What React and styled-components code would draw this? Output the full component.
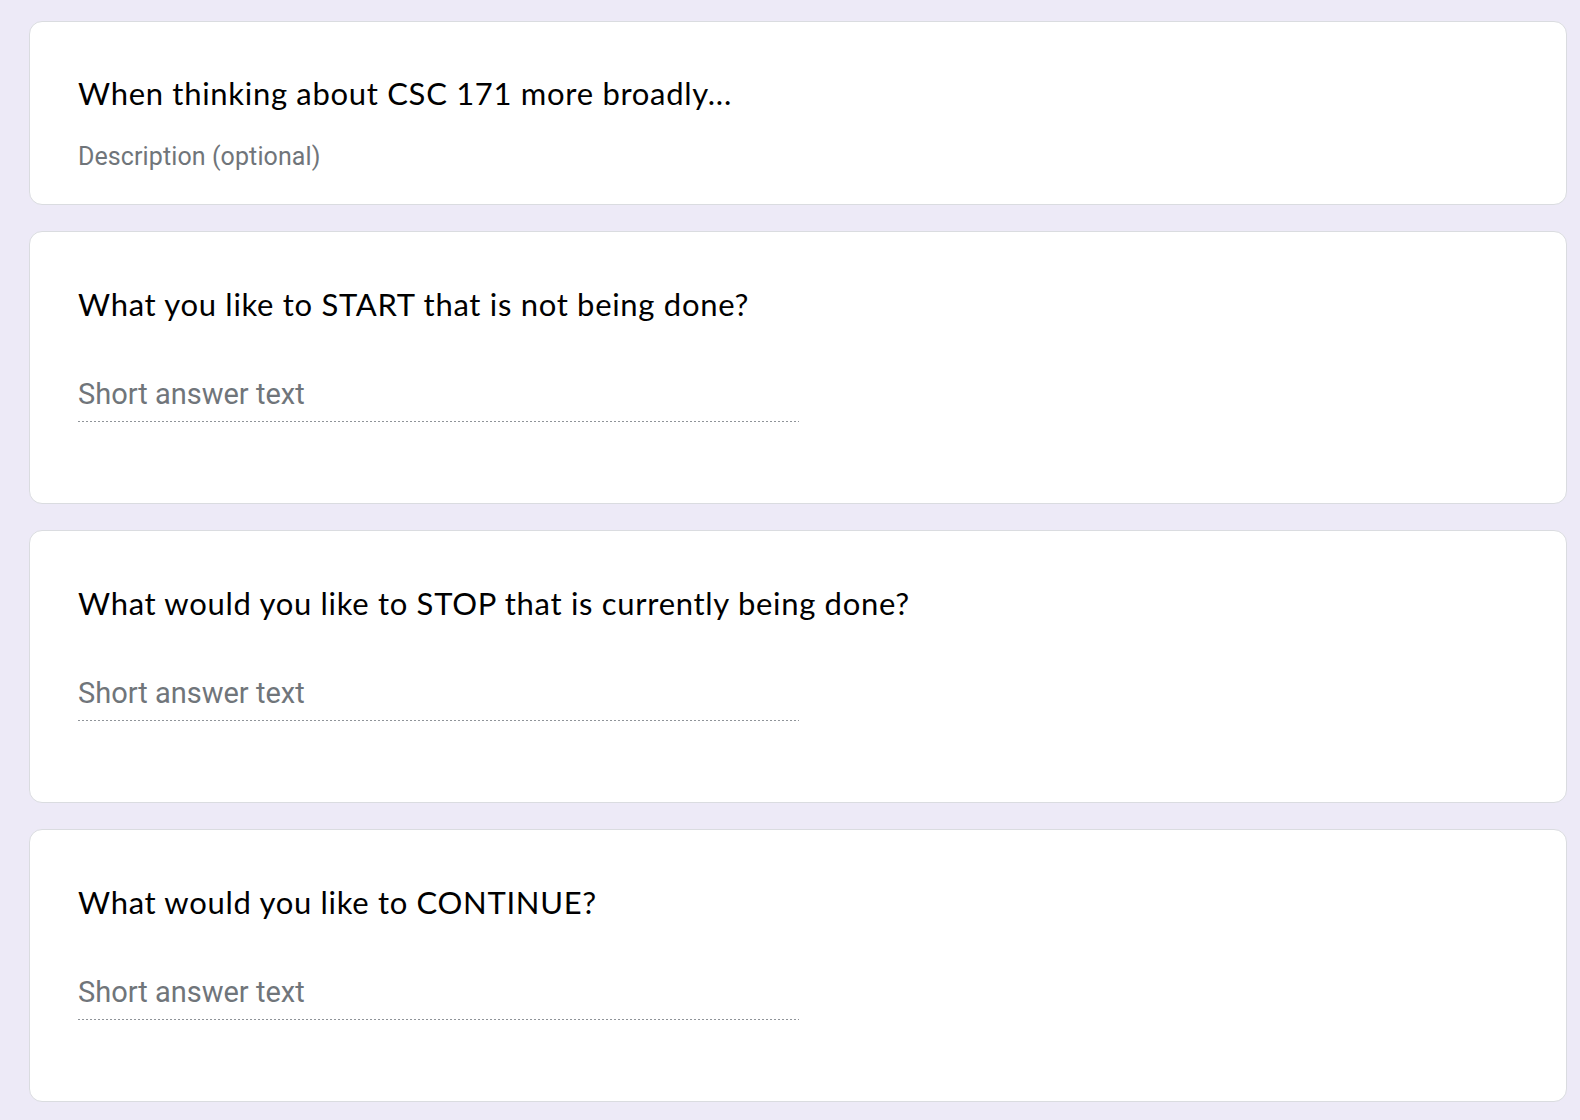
import styled, { createGlobalStyle } from "styled-components";

const GlobalStyle = createGlobalStyle`
  html, body {
    margin: 0;
    padding: 0;
    background-color: #edeaf7;
  }
`;

const questions = [
  "What you like to START that is not being done?",
  "What would you like to STOP that is currently being done?",
  "What would you like to CONTINUE?",
];

function App() {
  return (
    <>
      <GlobalStyle />
      <FormWrap>
        <SectionCard>
          <Title>When thinking about CSC 171 more broadly...</Title>
          <Description>Description (optional)</Description>
        </SectionCard>

        {questions.map((q) => (
          <QuestionCard key={q}>
            <Title>{q}</Title>
            <ShortAnswer>Short answer text</ShortAnswer>
          </QuestionCard>
        ))}
      </FormWrap>
    </>
  );
}

const FormWrap = styled.div`
  display: flex;
  flex-direction: column;
  gap: 26px;
  width: 1538px;
  padding: 21px 0 19px 29px;
  box-sizing: content-box;
`;

const Card = styled.div`
  box-sizing: border-box;
  background-color: #fff;
  border: 1px solid #dadce0;
  border-radius: 13px;
  padding: 0 48px;
`;

const SectionCard = styled(Card)`
  height: 184px;
  padding-top: 53px;
`;

const QuestionCard = styled(Card)`
  height: 273px;
  padding-top: 54px;
`;

const Title = styled.div`
  font-family: Lato, "Open Sans", sans-serif;
  font-size: 31px;
  line-height: 36px;
  letter-spacing: 0.7px;
  color: #000;
`;

const Description = styled.div`
  margin-top: 31px;
  font-family: Roboto, "Liberation Sans", sans-serif;
  font-size: 25px;
  line-height: 29px;
  letter-spacing: 0.1px;
  color: #70757a;
`;

const ShortAnswer = styled.div`
  width: 721px;
  margin-top: 55px;
  padding-bottom: 11px;
  font-family: Roboto, "Liberation Sans", sans-serif;
  font-size: 29px;
  line-height: 34px;
  color: #70757a;
  background-image: repeating-linear-gradient(to right, #8f9499 0 2px, transparent 2px 4px);
  background-repeat: no-repeat;
  background-size: 100% 1px;
  background-position: left bottom;
`;

export default App;
